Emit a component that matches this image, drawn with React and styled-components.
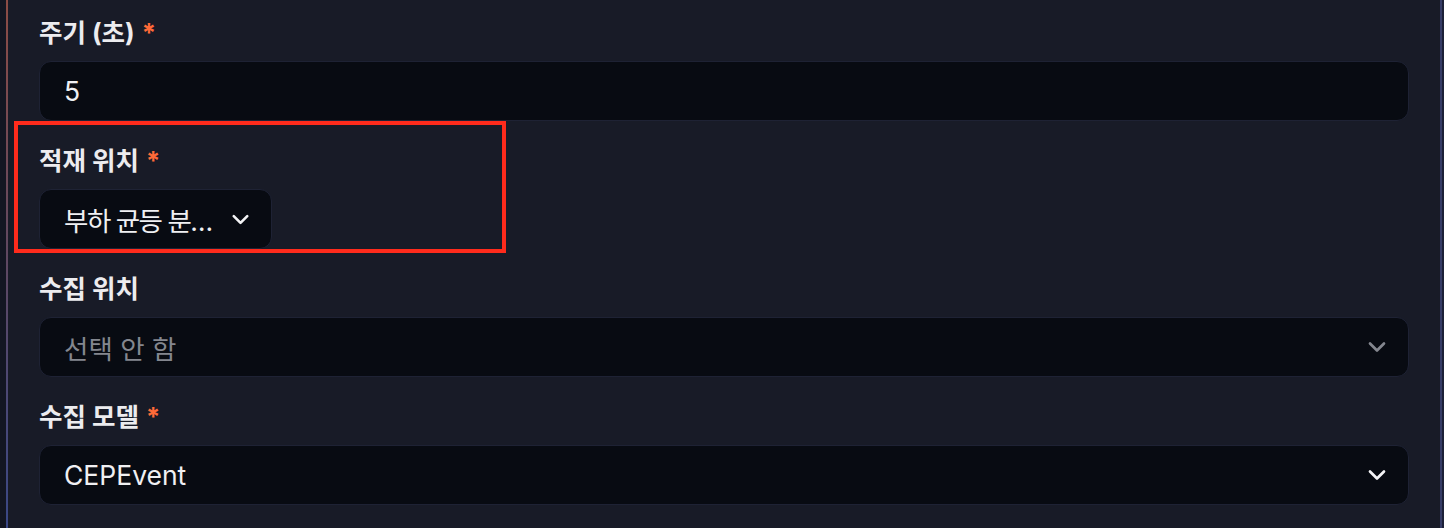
import React from 'react'
import styled, {createGlobalStyle} from 'styled-components'
import {ChevronDown} from 'lucide-react'

const Global = createGlobalStyle`
body{
  margin:0;
  background:#181b27;
  font-family:Inter,"Noto Sans CJK KR","Noto Sans",sans-serif;
}
`

const Shell = styled.div`
display:flex;
height:100vh;
min-height:528px;
background:#181b27;
`
const Gutter = styled.div`
width:6px;
background:#131622;
`
const Rail = styled.div`
width:2px;
background:linear-gradient(180deg,#8c4c45 0%,#5e4862 50%,#3a4886 100%);
`
const Panel = styled.form`
position:relative;
flex:1;
display:flex;
flex-direction:column;
gap:26px;
padding:19px 31px 0 31px;
`
const Edge = styled.div`
width:4px;
border-left:2px solid #363c66;
background:#1d2138;
box-sizing:border-box;
`
const Field = styled.div`
display:flex;
flex-direction:column;
align-items:flex-start;
gap:14px;
`
const Label = styled.label`
font-size:25.5px;
line-height:28px;
font-weight:700;
color:#ececef;
`
const Required = styled.span`
margin-left:7px;
color:#ff6a38;
`
const Box = styled.div`
box-sizing:border-box;
display:flex;
align-items:center;
gap:${p => (p.$compact ? '11px' : '23px')};
height:60px;
width:${p => (p.$compact ? 'auto' : '100%')};
padding:0 17px 0 24px;
background:#080b12;
border:1px solid #1e2234;
border-radius:12px;
font-size:26.5px;
color:${p => (p.$muted ? '#84878f' : '#f0f0f2')};
`
const Value = styled.span`
flex:${p => (p.$compact ? 'none' : '1')};
width:${p => (p.$compact ? '152px' : 'auto')};
letter-spacing:${p => (p.$compact ? '-1.5px' : 'normal')};
white-space:nowrap;
overflow:hidden;
text-overflow:ellipsis;
`
const Caret = styled(ChevronDown)`
flex:none;
color:${p => (p.$muted ? '#84878f' : '#f4f4f6')};
`
const Highlight = styled.div`
position:absolute;
left:6px;
top:121px;
width:492px;
height:132px;
box-sizing:border-box;
border:4px solid #ff2b1c;
pointer-events:none;
`

function Select({value, muted, compact}) {
  return (
    <Box $compact={compact} $muted={muted}>
      <Value $compact={compact}>{value}</Value>
      <Caret size={compact ? 27 : 28} strokeWidth={2.3} $muted={muted} />
    </Box>
  )
}

export default function App() {
  return (
    <Shell>
      <Global />
      <Gutter />
      <Rail />
      <Panel>
        <Field>
          <Label>주기 (초)<Required>*</Required></Label>
          <Box>5</Box>
        </Field>
        <Field>
          <Label>적재 위치<Required>*</Required></Label>
          <Select value='부하 균등 분산 배치' compact />
        </Field>
        <Field>
          <Label>수집 위치</Label>
          <Select value='선택 안 함' muted />
        </Field>
        <Field>
          <Label>수집 모델<Required>*</Required></Label>
          <Select value='CEPEvent' />
        </Field>
        <Highlight />
      </Panel>
      <Edge />
    </Shell>
  )
}
